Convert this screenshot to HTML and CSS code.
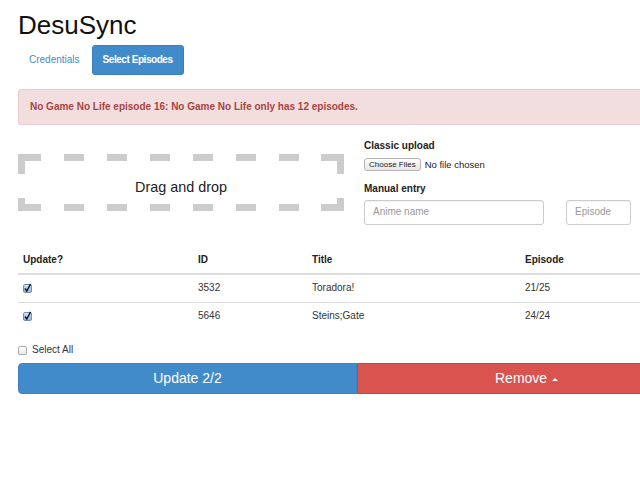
FILE: index.html
```html
<!DOCTYPE html>
<html>
<head>
<meta charset="utf-8">
<link rel="stylesheet" href="styles.css">
</head>
<body>
<div class="page">
  <h1 class="title">DesuSync</h1>
  <ul class="nav">
    <li class="pill">Credentials</li>
    <li class="pill active">Select Episodes</li>
  </ul>
  <div class="alert">No Game No Life episode 16: No Game No Life only has 12 episodes.</div>
  <div class="inputs">
    <div class="dropzone">Drag and drop</div>
    <div class="forms">
      <div class="group">
        <div class="label">Classic upload</div>
        <div class="file"><button class="file-btn">Choose Files</button><span class="file-text">No file chosen</span></div>
      </div>
      <div class="group">
        <div class="label">Manual entry</div>
        <div class="manual">
          <div class="input name">Anime name</div>
          <div class="input episode">Episode</div>
        </div>
      </div>
    </div>
  </div>
  <table class="table">
    <thead>
      <tr><th class="c1">Update?</th><th class="c2">ID</th><th class="c3">Title</th><th class="c4">Episode</th></tr>
    </thead>
    <tbody>
      <tr>
        <td><svg class="check" width="9" height="10" viewBox="0 0 9 10"><defs><linearGradient id="g1" x1="0" y1="0" x2="0" y2="1"><stop offset="0" stop-color="#d6e6f7"/><stop offset="1" stop-color="#8fb5e0"/></linearGradient></defs><rect x="0.5" y="1.5" width="8" height="8" rx="1.5" fill="url(#g1)" stroke="#6f8fb5"/><path d="M2 5.5 L3.8 8 L7.6 0.8" fill="none" stroke="#111" stroke-width="1.4"/></svg></td>
        <td>3532</td><td>Toradora!</td><td>21/25</td>
      </tr>
      <tr>
        <td><svg class="check" width="9" height="10" viewBox="0 0 9 10"><rect x="0.5" y="1.5" width="8" height="8" rx="1.5" fill="url(#g1)" stroke="#6f8fb5"/><path d="M2 5.5 L3.8 8 L7.6 0.8" fill="none" stroke="#111" stroke-width="1.4"/></svg></td>
        <td>5646</td><td>Steins;Gate</td><td>24/24</td>
      </tr>
    </tbody>
  </table>
  <div class="selectall"><span class="box"></span><span>Select All</span></div>
  <div class="actions">
    <div class="btn update">Update 2/2</div>
    <div class="btn remove">Remove <span class="caret"></span></div>
  </div>
</div>
</body>
</html>
```

FILE: styles.css
```css
html, body {
  margin: 0;
  padding: 0;
  overflow: hidden;
  background: #fff;
}
body {
  font-family: "Liberation Sans", Arial, sans-serif;
  font-size: 10px;
  line-height: 14.4px;
  color: #333;
}
.page {
  width: 678px;
  padding-left: 18px;
}
.title {
  font-size: 26px;
  line-height: 28.6px;
  font-weight: normal;
  color: #111;
  margin: 11px 0 5px;
}
.nav {
  list-style: none;
  margin: 0;
  padding: 0;
  display: flex;
  gap: 1px;
}
.pill {
  padding: 7px 10px;
  line-height: 14.4px;
  color: #428bca;
  border-radius: 3px;
  border: 1px solid transparent;
}
.pill.active {
  background: #428bca;
  color: #fff;
  border-color: #3a7fbd;
  font-weight: bold;
  letter-spacing: -0.45px;
}
.alert {
  margin-top: 14px;
  padding: 10px 11px;
  background: #f2dede;
  border: 1px solid #ebccd1;
  border-radius: 3px;
  color: #a94442;
  font-weight: bold;
}
.inputs {
  display: grid;
  grid-template-columns: 326px 1fr;
  column-gap: 20px;
  margin-top: 14px;
}
.dropzone {
  margin-top: 15px;
  height: 57px;
  box-sizing: border-box;
  padding-top: 23px;
  text-align: center;
  font-size: 14.4px;
  line-height: 20px;
  color: #222;
  background:
    linear-gradient(#ccc, #ccc) left top / 23px 7px no-repeat,
    linear-gradient(#ccc, #ccc) right top / 23px 7px no-repeat,
    linear-gradient(#ccc, #ccc) left bottom / 23px 7px no-repeat,
    linear-gradient(#ccc, #ccc) right bottom / 23px 7px no-repeat,
    repeating-linear-gradient(90deg, transparent 0 3px, #ccc 3px 23px, transparent 23px 43px) left top / 100% 7px no-repeat,
    repeating-linear-gradient(90deg, transparent 0 3px, #ccc 3px 23px, transparent 23px 43px) left bottom / 100% 7px no-repeat,
    linear-gradient(#ccc, #ccc) left top / 7px 20px no-repeat,
    linear-gradient(#ccc, #ccc) right top / 7px 20px no-repeat,
    linear-gradient(#ccc, #ccc) left bottom / 7px 13px no-repeat,
    linear-gradient(#ccc, #ccc) right bottom / 7px 13px no-repeat;
}
.group {
  margin-bottom: 10px;
}
.label {
  font-weight: bold;
  color: #222;
  margin-bottom: 4px;
}
.file {
  display: flex;
  align-items: center;
  height: 14px;
}
.file-btn {
  font-family: "Liberation Sans", Arial, sans-serif;
  font-size: 8px;
  line-height: 11px;
  padding: 0 4px;
  height: 13px;
  border: 1px solid #b5b5b5;
  border-radius: 3px;
  background: linear-gradient(#fdfdfd, #e6e6e6);
  color: #222;
}
.file-text {
  margin-left: 4px;
  font-size: 9.5px;
  color: #222;
}
.manual {
  display: flex;
  gap: 22px;
}
.input {
  height: 22.5px;
  line-height: 22.5px;
  border: 1px solid #ccc;
  border-radius: 3px;
  padding: 0 8px;
  color: #999;
  box-sizing: content-box;
  box-shadow: inset 0 1px 1px rgba(0,0,0,0.05);
}
.input.name { width: 162px; }
.input.episode { width: 47px; }
.table {
  width: 660px;
  border-collapse: collapse;
  margin-top: 12px;
}
.table th, .table td {
  text-align: left;
  padding: 6px 5px;
  line-height: 14.4px;
  vertical-align: middle;
}
.table th {
  font-weight: bold;
  color: #222;
  border-bottom: 2px solid #ddd;
}
.table td {
  border-top: 1px solid #ddd;
}
.table tbody tr:first-child td { border-top: 0; }
.c1 { width: 165px; }
.c2 { width: 104px; }
.c3 { width: 203px; }
.check { display: block; }
.selectall {
  margin-top: 14px;
  display: flex;
  align-items: center;
  gap: 5px;
  color: #333;
}
.box {
  width: 7px;
  height: 7px;
  border: 1px solid #aaa;
  border-radius: 2px;
  background: linear-gradient(#fff, #e8e8e8);
}
.actions {
  display: flex;
  margin-top: 6px;
}
.btn {
  flex: 1;
  text-align: center;
  color: #fff;
  font-size: 14px;
  line-height: 19px;
  padding: 5px 0;
}
.update {
  background: #428bca;
  border: 1px solid #3d82be;
  border-radius: 4px 0 0 4px;
}
.remove {
  background: #d9534f;
  border: 1px solid #d43f3a;
}
.caret {
  display: inline-block;
  width: 0;
  height: 0;
  border-left: 3px solid transparent;
  border-right: 3px solid transparent;
  border-bottom: 3px solid #fff;
  vertical-align: middle;
  margin-left: 1px;
}
```
